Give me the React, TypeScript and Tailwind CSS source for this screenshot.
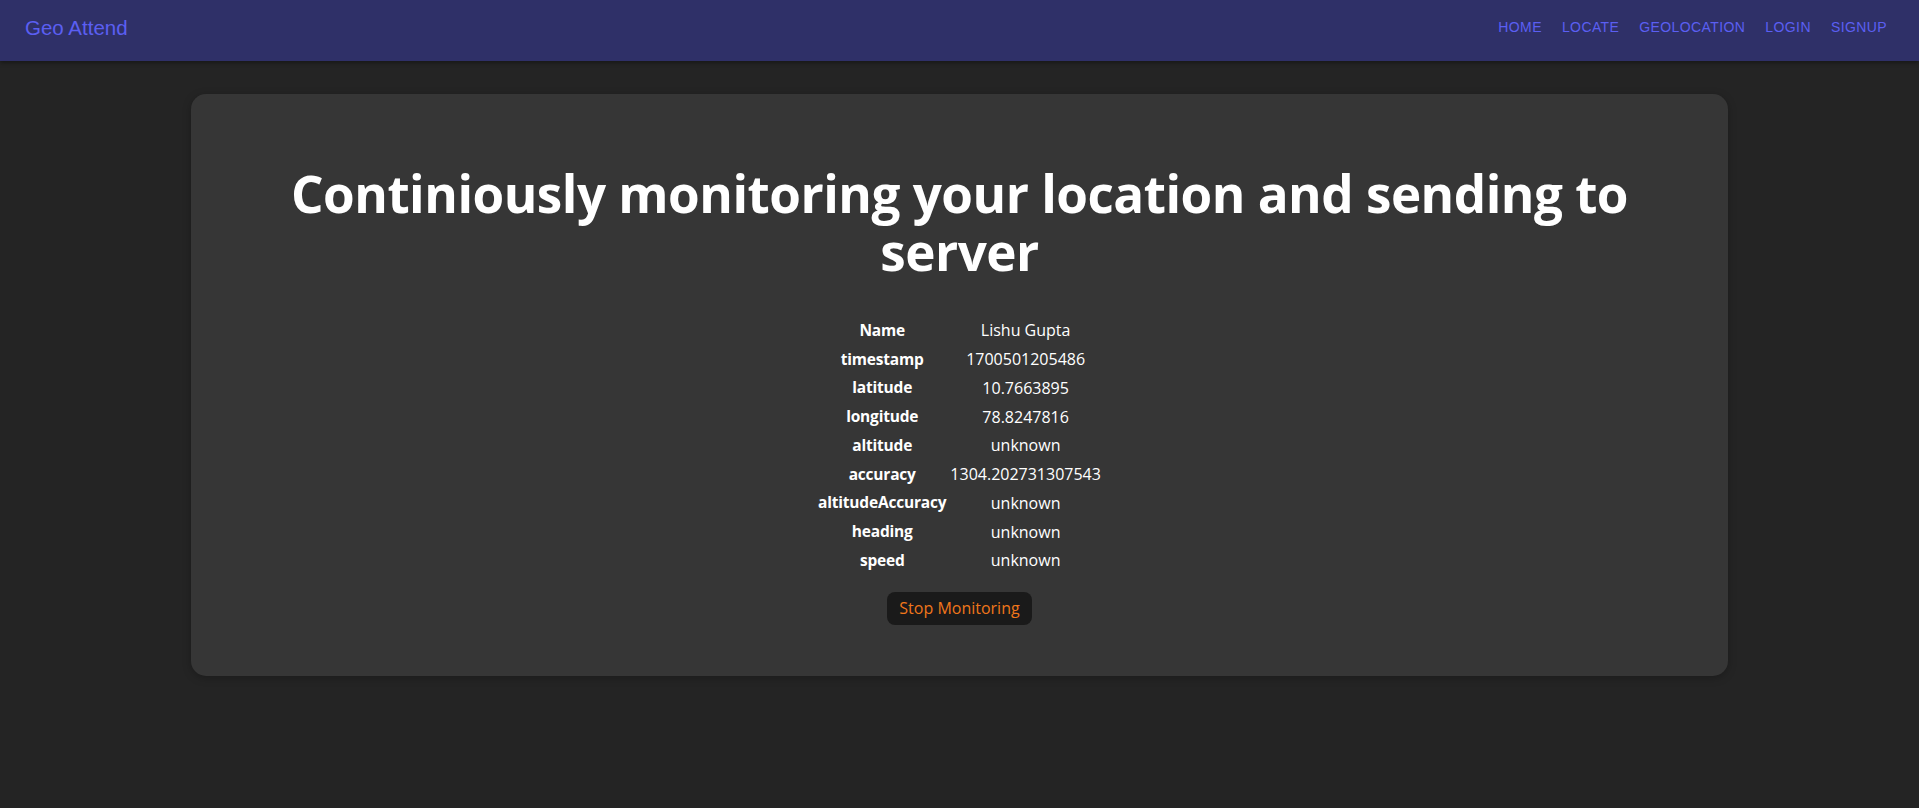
import React from 'react'

const navLinks = ['HOME', 'LOCATE', 'GEOLOCATION', 'LOGIN', 'SIGNUP']

const rows: [string, string][] = [
  ['Name', 'Lishu Gupta'],
  ['timestamp', '1700501205486'],
  ['latitude', '10.7663895'],
  ['longitude', '78.8247816'],
  ['altitude', 'unknown'],
  ['accuracy', '1304.202731307543'],
  ['altitudeAccuracy', 'unknown'],
  ['heading', 'unknown'],
  ['speed', 'unknown'],
]

export default function App() {
  return (
    <div className="min-h-[808px] bg-[#242424] text-white font-['Open_Sans',sans-serif]">
      {/* Navbar */}
      <header className="h-[61px] bg-[#2f3068] shadow-[0_2px_4px_rgba(0,0,0,0.35)] flex items-center justify-between pl-[25px] pr-[32px] font-['Liberation_Sans',Arial,sans-serif]">
        <div className="text-[20.5px] text-[#5b5ff2] leading-none -mt-[5px]">Geo Attend</div>
        <nav className="flex items-center gap-[20px] text-[14px] tracking-[0.4px] text-[#5b5ff2] -mt-[8px]">
          {navLinks.map((l) => (
            <a key={l} href="#" className="leading-none">
              {l}
            </a>
          ))}
        </nav>
      </header>

      {/* Card */}
      <main className="pt-[33px]">
        <section className="w-[1537px] mx-auto bg-[#363636] rounded-[15px] shadow-[0_2px_8px_rgba(0,0,0,0.25)] pt-[70px] pb-[51px] flex flex-col items-center">
          <h1 className="text-[51.2px] font-bold leading-[58px] text-center max-w-[1400px] tracking-[-0.5px]">
            Continiously monitoring your location and sending to server
          </h1>
          <table className="mt-[36px] border-collapse text-[16px] text-center">
            <tbody>
              {rows.map(([k, v]) => (
                <tr key={k} className="h-[28.75px]">
                  <th className="font-bold text-[15.5px] tracking-[-0.2px] px-[2px]">{k}</th>
                  <td className="font-medium px-[2px]">{v}</td>
                </tr>
              ))}
            </tbody>
          </table>
          <button className="mt-[17px] h-[33px] px-[12px] rounded-[8px] bg-[#1a1a1a] text-[#f0761b] text-[16px] font-medium">
            Stop Monitoring
          </button>
        </section>
      </main>
    </div>
  )
}
